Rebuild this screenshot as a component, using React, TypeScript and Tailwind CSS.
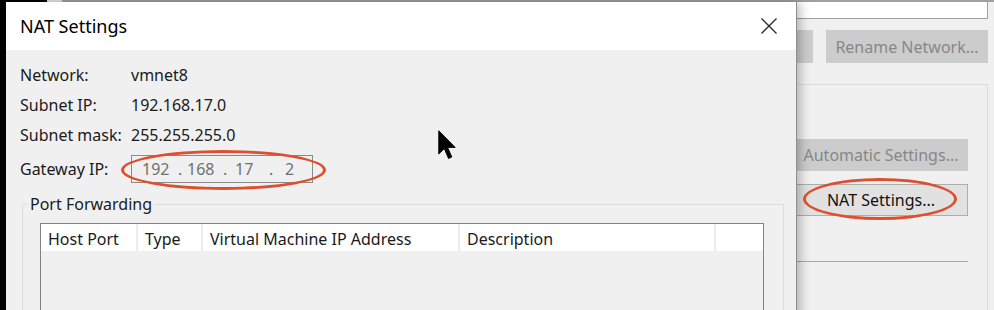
import React from "react";

const font = { fontFamily: '"Noto Sans", "Open Sans", sans-serif' };

function Cursor() {
  return (
    <svg width="18" height="30" viewBox="0 0 12 20" className="absolute left-[438px] top-[130px]">
      <path d="M0.5 0.5 L0.5 16 L4.2 12.4 L7 19 L9.2 18 L6.4 11.6 L11.5 11.6 Z" fill="#000" stroke="#000" strokeWidth="0.6" strokeLinejoin="round" />
    </svg>
  );
}

function NatDialog() {
  const rows = [
    ["Network:", "vmnet8"],
    ["Subnet IP:", "192.168.17.0"],
    ["Subnet mask:", "255.255.255.0"],
  ];
  const cols = [
    { name: "Host Port", w: "w-[97px]" },
    { name: "Type", w: "w-[65px]" },
    { name: "Virtual Machine IP Address", w: "w-[257px]" },
    { name: "Description", w: "w-[256px]" },
  ];

  return (
    <div className="absolute left-[6px] top-[2px] w-[791px] h-[330px] flex flex-col border-r border-[#8f8f8f] shadow-[3px_0_10px_rgba(0,0,0,0.28)]">
      {/* title bar */}
      <div className="h-[48px] bg-white flex items-center justify-between pl-[14px] pr-[19px]">
        <span className="text-[18px] text-black">NAT Settings</span>
        <svg width="16" height="16" viewBox="0 0 16 16">
          <path d="M0.5 0.5 L15.5 15.5 M15.5 0.5 L0.5 15.5" stroke="#2b2b2b" strokeWidth="1.3" />
        </svg>
      </div>

      {/* body */}
      <div className="flex-1 bg-[#f0f0f0] pl-[14px] pt-[10px] text-[16px] text-[#1a1a1a]">
        {rows.map(([label, value]) => (
          <div key={label} className="h-[30px] flex items-center">
            <span className="w-[111px]">{label}</span>
            <span>{value}</span>
          </div>
        ))}

        <div className="mt-[5px] h-[28px] flex items-center">
          <span className="w-[111px]">Gateway IP:</span>
          <div className="w-[182px] h-[28px] border border-[#8a8a8a] flex items-center pl-[10px] text-[#707070]">
            <span className="w-[36px]">192</span>
            <span className="w-[9px]">.</span>
            <span className="w-[36px]">168</span>
            <span className="w-[12px]">.</span>
            <span className="w-[34px]">17</span>
            <span className="w-[16px]">.</span>
            <span>2</span>
          </div>
        </div>

        {/* Port forwarding group */}
        <div className="mt-[21px] ml-[2px] w-[762px] h-[120px] border border-[#dcdcdc]">
          <span className="block w-fit ml-[4px] px-[3px] -mt-[12px] leading-[22px] bg-[#f0f0f0]">
            Port Forwarding
          </span>
          <div className="mt-[8px] ml-[17px] w-[724px] h-[100px] border border-[#828282] bg-[#f0f0f0]">
            <div className="h-[27px] bg-white flex">
              {cols.map((c) => (
                <div key={c.name} className={`${c.w} h-full flex items-center pl-[7px] pt-[2px] border-r-2 border-[#ececec]`}>
                  {c.name}
                </div>
              ))}
              <div className="flex-1" />
            </div>
          </div>
        </div>
      </div>
    </div>
  );
}

function BackgroundWindow() {
  return (
    <div className="flex-1 flex flex-col bg-[#f0f0f0]">
      <div className="h-[2px] flex">
        <div className="w-[41px] bg-black" />
        <div className="w-[15px] bg-[#e6e6e6]" />
        <div className="flex-1 bg-[#a0a0a0]" />
      </div>
      <div className="flex-1 flex">
        <div className="flex-1" />
        <div className="w-[200px] flex flex-col text-[16px]">
          <div className="w-[194px] h-[17px] bg-white border-b border-r border-[#a0a0a0]" />
          <div className="mt-[11px] h-[33px] flex">
            <div className="w-[19px] bg-[#cccccc]" />
            <div className="ml-[13px] w-[162px] bg-[#cccccc] flex items-center justify-center text-[#878787]">
              Rename Network...
            </div>
          </div>
          <div className="mt-[21px] w-[194px] flex-1 border-t border-r border-[#dcdcdc] pt-[54px]">
            <div className="w-[174px] h-[32px] bg-[#cccccc] flex items-center justify-center text-[#878787]">
              Automatic Settings...
            </div>
            <div className="mt-[13px] w-[174px] h-[32px] bg-[#e1e1e1] border border-[#adadad] flex items-center justify-center text-[#111]">
              NAT Settings...
            </div>
            <div className="mt-[45px] w-[174px] h-px bg-[#a8a8a8]" />
          </div>
        </div>
      </div>
    </div>
  );
}

export default function App() {
  return (
    <div className="relative w-[994px] h-[310px] overflow-hidden flex bg-black" style={font}>
      <div className="w-[6px] bg-black" />
      <BackgroundWindow />
      <NatDialog />

      {/* annotations */}
      <div className="absolute left-[121px] top-[150px] w-[205px] h-[40px] rounded-[50%] border-[3px] border-[#de4f30]" />
      <div className="absolute left-[803px] top-[178px] w-[154px] h-[42px] rounded-[50%] border-[3px] border-[#de4f30]" />
      <Cursor />
    </div>
  );
}
